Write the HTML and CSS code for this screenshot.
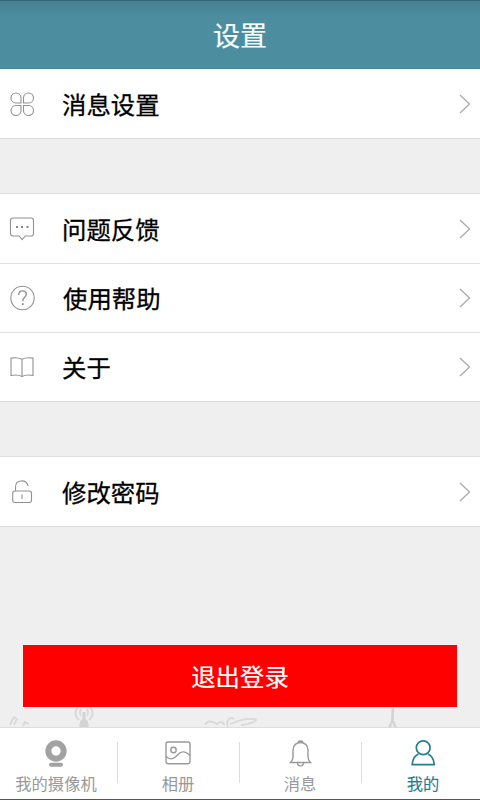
FILE: index.html
```html
<!DOCTYPE html>
<html lang="zh-CN">
<head>
<meta charset="utf-8">
<title>设置</title>
<link rel="stylesheet" href="styles.css">
</head>
<body>
<div class="app">
  <header class="header"><h1>设置</h1></header>
  <main class="content">
    <section class="group">
      <div class="row">
        <svg class="icon" viewBox="0 0 26 26"><path d="M12 12H6.800A5 5 0 1 1 12 6.800ZM14.500 12V6.800A5 5 0 1 1 19.700 12ZM12 14.500V19.700A5 5 0 1 1 6.800 14.500ZM14.500 14.500H19.700A5 5 0 1 1 14.500 19.700Z"/></svg>
        <span class="label">消息设置</span>
        <svg class="chevron" viewBox="0 0 12 20"><path d="M1 1 10.5 10 1 19"/></svg>
      </div>
    </section>
    <section class="group">
      <div class="row">
        <svg class="icon" viewBox="0 0 26 26"><path d="M4 2H22Q24.500 2 24.500 4.500V17.500Q24.500 20 22 20H16.200L13.200 23.700 10.200 20H4Q1.500 20 1.500 17.500V4.500Q1.500 2 4 2Z"/><path class="dots" d="M7 10h2v2H7ZM12 10h2v2h-2ZM17.500 10h2v2h-2Z"/></svg>
        <span class="label">问题反馈</span>
        <svg class="chevron" viewBox="0 0 12 20"><path d="M1 1 10.5 10 1 19"/></svg>
      </div>
      <div class="row row-help">
        <svg class="icon" viewBox="0 0 26 26"><circle cx="13.500" cy="13" r="11.700"/><path class="question" d="M9.700 10C9.700 4.500 17.300 4.700 17.300 9.200C17.300 12.200 13.700 12.300 13.700 16.200"/><path class="dots" d="M12.900 18.200h1.700v1.800h-1.700Z"/></svg>
        <span class="label">使用帮助</span>
        <svg class="chevron" viewBox="0 0 12 20"><path d="M1 1 10.5 10 1 19"/></svg>
      </div>
      <div class="row">
        <svg class="icon" viewBox="0 0 26 26"><path d="M13 5.200C9.700 3.500 5.700 3.500 2 4.100V21.500C5.700 20.800 9.700 20.800 13 22.500C16.300 20.800 20.300 20.800 24 21.500V4.100C20.300 3.500 16.300 3.500 13 5.200V22.500"/></svg>
        <span class="label">关于</span>
        <svg class="chevron" viewBox="0 0 12 20"><path d="M1 1 10.5 10 1 19"/></svg>
      </div>
    </section>
    <section class="group">
      <div class="row">
        <svg class="icon" viewBox="0 0 26 26"><rect x="3.700" y="12" width="18.800" height="11.500" rx="2.200"/><path d="M6.500 12V8.200C6.500 0 17.500 0 19.200 7.200M13 15.500v4.500"/></svg>
        <span class="label">修改密码</span>
        <svg class="chevron" viewBox="0 0 12 20"><path d="M1 1 10.5 10 1 19"/></svg>
      </div>
    </section>
    <button class="logout">退出登录</button>
    <svg class="scenery" viewBox="0 0 480 20"><path d="M10 18 14 10 17 12 14 18M23 19 25 15 29 17M78 0C74 4 75 10 79 13M90 0C94 4 93 10 89 13M81 2Q79 6 81 9M87 2Q89 6 87 9M205 18C207 13 213 14 217 17C220 14 224 15 224 18M228 20C225 13 231 9 234 12M230 17C239 13 246 11 254 12C261 13 248 18 241 18"/><path class="solid" d="M82.500 5h3v7q3 1 3 6v2h-9v-2q0-5 3-6ZM391.500 1h2.500v13l3 6h-3l-1.500-4-1.500 4h-3l3-6Z"/></svg>
  </main>
  <nav class="tabs">
    <div class="tab">
      <svg class="tab-icon" viewBox="0 0 30 30"><circle class="lens" cx="15" cy="13" r="7.700"/><path class="base" d="M10 26.700H20"/></svg>
      <span>我的摄像机</span>
    </div>
    <div class="tab">
      <svg class="tab-icon" viewBox="0 0 30 30"><rect x="3" y="4" width="24" height="21.700" rx="2"/><circle cx="10.500" cy="12" r="2.700"/><path d="M3 18.500C6 21.500 10 21.500 13 18.500C18 12.500 22 12.500 27 17.500"/></svg>
      <span>相册</span>
    </div>
    <div class="tab">
      <svg class="tab-icon" viewBox="0 0 30 30"><path d="M5.500 24.500Q8 22 8 19V12C8 2 23 2 23 12V19Q23 22 25.500 24.500ZM13.300 4.500C13.300 2.500 17.700 2.500 17.700 4.500M12.500 24.500C12.500 29 18.500 29 18.500 24.500"/></svg>
      <span>消息</span>
    </div>
    <div class="tab active">
      <svg class="tab-icon" viewBox="0 0 30 30"><circle cx="15.200" cy="9.700" r="6.900"/><path d="M10.500 16C7 17.500 4.500 20.500 4.200 26.700H26.200C25.900 20.500 23.400 17.500 19.900 16"/></svg>
      <span>我的</span>
    </div>
  </nav>
</div>
</body>
</html>
```
FILE: styles.css
```css
* { box-sizing: border-box; }
body {
  margin: 0;
  font-family: "Noto Sans CJK SC", sans-serif;
  background: #efefef;
}
.app {
  display: flex;
  flex-direction: column;
  width: 480px;
  height: 800px;
  overflow: hidden;
}
.header {
  height: 69px;
  flex: none;
  display: flex;
  justify-content: center;
  padding-top: 1px;
  border-top: 1px solid #2f6878;
  border-bottom: 1px solid #47899a;
  background: linear-gradient(#477f90, #4c8ea0 16px);
}
h1 {
  margin: 0;
  font-size: 27px;
  line-height: 65px;
  font-weight: 400;
  color: #f4ffff;
  -webkit-text-stroke: 0.200px #f4ffff;
}
.content {
  flex: 1;
  min-height: 0;
  display: flex;
  flex-direction: column;
}
.group {
  margin-bottom: 54px;
  border-top: 1px solid #dedede;
  border-bottom: 1px solid #dcdcdc;
  background: #fff;
}
.group:first-child { border-top: 0; }
.group:nth-child(3) { margin-bottom: 118px; }
.row {
  height: 69px;
  display: flex;
  align-items: center;
  padding: 0 9px;
}
.row + .row { border-top: 1px solid #e0e0e0; }
.icon {
  width: 26px;
  height: 26px;
  margin-right: 27px;
  fill: none;
  stroke: #929292;
  stroke-width: 1.1;
}
.dots { fill: #888; stroke: none; }
.question { stroke-width: 1.4; }
.label {
  flex: 1;
  font-size: 24.400px;
  line-height: 36px;
  color: #000;
  -webkit-text-stroke: 0.300px #000;
}
.row-help .label { padding-left: 1px; }
.chevron {
  width: 12px;
  height: 20px;
  fill: none;
  stroke: #aaa;
  stroke-width: 1.300;
}
.logout {
  flex: none;
  height: 62px;
  margin: 0 23px;
  padding: 0;
  border: 0;
  background: #f00;
  color: #fff;
  font: 24.400px/36px "Noto Sans CJK SC", sans-serif;
  -webkit-text-stroke: 0.200px #fff;
}
.scenery {
  flex: none;
  width: 480px;
  height: 20px;
  fill: none;
  stroke: #d9d9d9;
  stroke-width: 1.800;
}
.solid { fill: #d4d4d4; stroke: none; }
.tabs {
  flex: none;
  height: 73px;
  display: grid;
  grid-template-columns: 118px 122px 122px 118px;
  border-top: 1px solid #ddd;
  border-bottom: 1px solid #555;
  background: #fff;
}
.tab {
  display: flex;
  flex-direction: column;
  align-items: center;
  padding-top: 10px;
  color: #999;
  font-size: 16.300px;
  line-height: 24px;
  background: linear-gradient(#ddd, #ddd) right 14px / 1px 41px no-repeat;
}
.tab:first-child { padding-right: 6px; }
.tab:nth-child(2), .tab:nth-child(3) { padding-right: 2px; }
.tab-icon {
  width: 30px;
  height: 30px;
  margin-bottom: 3px;
  fill: none;
  stroke: #999;
  stroke-width: 1.400;
}
.lens { stroke: #a2a2a2; stroke-width: 6; }
.base { stroke: #a2a2a2; stroke-width: 4; stroke-linecap: round; }
.tab.active {
  padding-left: 4px;
  color: #287d8e;
  background: none;
  -webkit-text-stroke: 0.100px #287d8e;
}
.active .tab-icon { stroke: #287d8e; stroke-width: 1.700; }
```
